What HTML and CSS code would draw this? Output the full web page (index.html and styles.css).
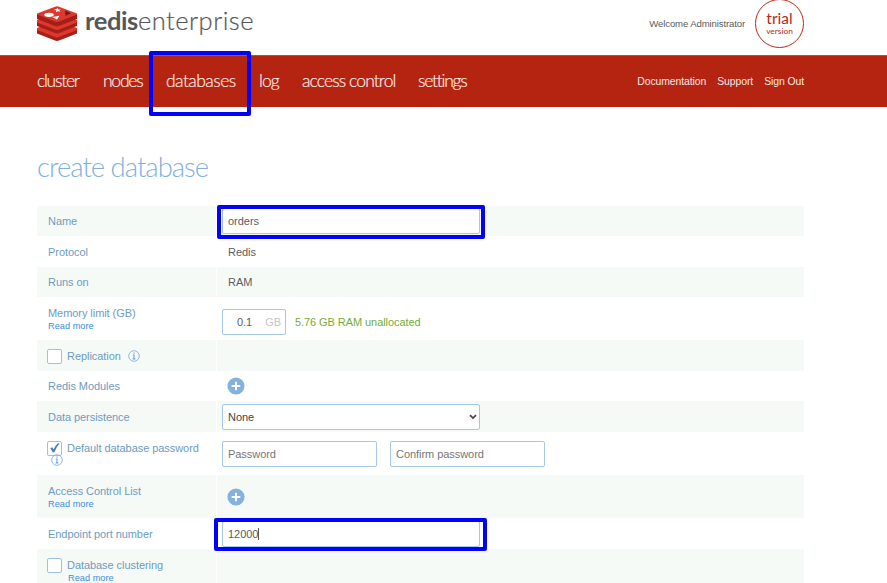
FILE: index.html
```html
<!DOCTYPE html>
<html lang="en">
<head>
<meta charset="utf-8">
<title>Redis Enterprise - create database</title>
<link rel="stylesheet" href="styles.css">
</head>
<body>
<svg class="defs" width="0" height="0">
  <symbol id="plus" viewBox="0 0 18 18"><circle cx="9" cy="9" r="8.6" fill="#84b1de"/><path d="M9 4.700v8.600M4.700 9h8.600" stroke="#fff" stroke-width="1.900"/></symbol>
  <symbol id="info" viewBox="0 0 12 12"><circle cx="6" cy="6" r="5.3" fill="none" stroke="#84b3df" stroke-width=".9"/><path d="M6 2.500v1.300M4.800 5H6v3.800M4.600 8.900h2.800" fill="none" stroke="#6ba3d8" stroke-width="1.100"/></symbol>
</svg>
<header class="top">
  <svg class="logo" viewBox="0 0 40 35" width="40" height="35">
    <path d="M0 23v4.500l18 7q2 .8 4 0l18-7V23z" fill="#a51f18"/>
    <path d="M0 22l20-7 20 7v2l-18 7q-2 .8-4 0L0 24z" fill="#dc382c"/>
    <path d="M0 15.500v4.500l18 7q2 .8 4 0l18-7v-4.500z" fill="#a51f18"/>
    <path d="M0 14l20-7 20 7v2.500l-18 7q-2 .8-4 0L0 16.500z" fill="#dc382c"/>
    <path d="M0 8v5l18 7q2 .8 4 0l18-7V8z" fill="#a51f18"/>
    <path d="M0 7.500L18 .7q2-.8 4 0l18 6.800v1L22 15.500q-2 .8-4 0L0 8.500z" fill="#dc382c"/>
    <ellipse cx="12" cy="8.800" rx="4.800" ry="2.100" fill="#fff"/>
    <path d="M17 3l2 .3 1.500-1.200 1 1.300 2.500.1-1.700 1 1 1.200-2.300-.4-2 1 .2-1.500z" fill="#fff"/>
    <path d="M15 11l7.500-1.200-2.500 3.700z" fill="#fff"/>
    <path d="M28 4.500l6 2.800-5.500 2.400z" fill="#731814"/>
  </svg>
  <div class="brand"><b>redis</b><span>enterprise</span></div>
  <div class="welcome">Welcome Administrator</div>
  <div class="trial"><span class="trial-main">trial</span><span class="trial-sub">version</span></div>
</header>
<nav class="bar">
  <a class="n1">cluster</a><a class="n2">nodes</a><a class="n3">databases</a><a class="n4">log</a><a class="n5">access control</a><a class="n6">settings</a>
  <div class="links"><a>Documentation</a><a>Support</a><a>Sign Out</a></div>
</nav>
<main>
  <h1>create database</h1>
  <div class="form">
    <div class="row name"><div class="label">Name</div><div class="value"><div class="field wide">orders</div></div></div>
    <div class="row protocol"><div class="label">Protocol</div><div class="value text">Redis</div></div>
    <div class="row runs"><div class="label">Runs on</div><div class="value text">RAM</div></div>
    <div class="row memory"><div class="label"><div>Memory limit (GB)<a class="more">Read more</a></div></div><div class="value"><div class="field mem">0.1<span class="unit">GB</span></div><span class="free">5.76 GB RAM unallocated</span></div></div>
    <div class="row replication"><div class="label"><i class="check"></i>Replication<svg class="info"><use href="#info"/></svg></div><div class="value"></div></div>
    <div class="row modules"><div class="label">Redis Modules</div><div class="value"><svg class="plus"><use href="#plus"/></svg></div></div>
    <div class="row persistence"><div class="label">Data persistence</div><div class="value"><div class="field wide select">None<svg width="8" height="6" viewBox="0 0 8 6"><path d="M1 1.200l3 2.900 3-2.900" fill="none" stroke="#444" stroke-width="1.700"/></svg></div></div></div>
    <div class="row password"><div class="label"><div><div class="line"><i class="check"><svg width="13" height="12" viewBox="0 0 12 12"><path d="M1.800 6.200l2-1 1.300 2.200Q7 3.300 9.400 1.200l1.600.3Q7.800 5 5.900 10.200H4.200Q3.200 8 1.800 6.200z" fill="#477eab"/></svg></i>Default database password</div><svg class="info below"><use href="#info"/></svg></div></div><div class="value"><div class="field pass">Password</div><div class="field pass">Confirm password</div></div></div>
    <div class="row acl"><div class="label"><div>Access Control List<a class="more">Read more</a></div></div><div class="value"><svg class="plus"><use href="#plus"/></svg></div></div>
    <div class="row port"><div class="label">Endpoint port number</div><div class="value"><div class="field wide">12000<i class="caret"></i></div></div></div>
    <div class="row cluster"><div class="label"><i class="check"></i><div>Database clustering<a class="more">Read more</a></div></div><div class="value"></div></div>
  </div>
</main>
<div class="mark mark-nav"></div>
<div class="mark mark-name"></div>
<div class="mark mark-port"></div>
</body>
</html>
```
FILE: styles.css
```css
* { box-sizing: border-box; }
html { overflow: hidden; }
body { margin: 0; height: 583px; overflow: hidden; position: relative; background: #fff; color: #5c5c5c; font: 11px/14px "Liberation Sans", Arial, sans-serif; }
.defs { position: absolute; }
.top { height: 55px; width: 804px; padding-left: 37px; display: flex; align-items: flex-start; }
.logo { margin-top: 6px; }
.brand { margin: 4px 0 0 8px; font: 300 25.5px/32px Lato, sans-serif; color: #54585a; display: flex; white-space: nowrap; }
.brand b { font-weight: 700; letter-spacing: -.4px; }
.brand span { letter-spacing: .5px; -webkit-text-stroke: .2px #54585a; }
.welcome { margin: 17px 10px 0 auto; font-size: 9.6px; letter-spacing: -.13px; }
.trial { width: 49px; height: 49px; margin-top: -1px; border: 1.5px solid #b92917; border-radius: 50%; color: #b92917; font-family: Lato, sans-serif; font-weight: 400; text-align: center; display: flex; flex-direction: column; }
.trial-main { font-size: 15.5px; line-height: 16px; margin-top: 10px; }
.trial-sub { font-size: 8.4px; line-height: 10px; }
.bar { height: 52px; background: #b42411; border-top: 1px solid #c24a3c; color: #f9e9e7; padding-left: 37px; width: 887px; display: flex; align-items: center; gap: 23px; font: 300 17.5px/50px Lato, sans-serif; white-space: nowrap; }
.bar > a { letter-spacing: -.9px; padding-bottom: 2px; -webkit-text-stroke: .2px #f9e9e7; }
.n1 { width: 43px; } .n2 { width: 40px; } .n3 { width: 70px; } .n4 { width: 20px; } .n5 { width: 93px; } .n6 { width: 50px; }
.bar > .n1, .bar > .n2, .bar > .n6 { letter-spacing: -1.25px; }
.bar > .n3 { letter-spacing: -.55px; }
.links { margin: 0 83px 0 auto; display: flex; gap: 11px; font: 10.4px/52px "Liberation Sans", Arial, sans-serif; letter-spacing: -.07px; }
main { padding-left: 37px; }
h1 { margin: 43px 0 0; height: 56px; font: 300 27.5px/34px Lato, sans-serif; letter-spacing: -1px; color: #7eb1df; white-space: nowrap; }
.form { width: 767px; }
.row { display: grid; grid-template-columns: 179px 1fr; column-gap: 1px; }
.row:nth-child(odd) > div { background: #f6faf7; }
.label { color: #6d9cc2; padding-left: 11px; display: flex; align-items: center; white-space: nowrap; letter-spacing: -.06px; }
.value { padding-left: 5px; display: flex; align-items: center; letter-spacing: -.03px; }
.value.text { padding-left: 11px; }
.more { display: block; font-size: 9.2px; line-height: 12px; color: #3d8ee0; letter-spacing: .03px; }
.runs { height: 30px; }
.name { height: 30px; }
.protocol { height: 30px; margin-bottom: 1px; padding-top: 1px; }
.memory { height: 43px; }
.memory .value { padding-top: 6px; }
.replication { height: 31px; }
.modules { height: 30px; }
.persistence { height: 31px; }
.password { height: 43px; }
.acl { height: 43px; }
.port { height: 31px; }
.cluster { height: 40px; }
.field { height: 26px; border: 1px solid #a5c8e8; border-radius: 2px; background: #fff; display: flex; align-items: center; padding-left: 5px; }
.wide { width: 258px; }
.mem { width: 64px; padding-left: 14px; margin-right: 9px; }
.unit { margin-left: 13px; color: #c5c5c5; }
.free { color: #76ac35; letter-spacing: -.07px; }
.select { justify-content: space-between; padding-right: 2px; color: #444; }
.pass { width: 155px; margin-right: 13px; color: #777; letter-spacing: -.05px; }
.check { width: 15px; height: 15px; flex: none; border: 1px solid #9bc3e5; border-radius: 2px; background: #fff; margin: 1px 5px 0 -1px; display: flex; }
.info { width: 12px; height: 12px; margin-left: 7px; }
.line { display: flex; }
.line .check { margin-top: 0; }
.below { display: block; margin: -2px 0 0 3px; }
.plus { width: 18px; height: 18px; margin-left: 5px; }
.acl .plus { margin-top: 1px; }
.cluster .label { align-items: flex-start; padding-top: 9px; }
.cluster .check { margin-top: 0; }
.cluster .more { margin-left: 1px; }
.caret { width: 1px; height: 12px; background: #555; }
.mark { position: absolute; border: 4px solid #0202fa; border-radius: 2px; }
.mark-nav { left: 149px; top: 51px; width: 102px; height: 65px; }
.mark-name { left: 217px; top: 205px; width: 268px; height: 34px; }
.mark-port { left: 214px; top: 518px; width: 273px; height: 33px; }
```
